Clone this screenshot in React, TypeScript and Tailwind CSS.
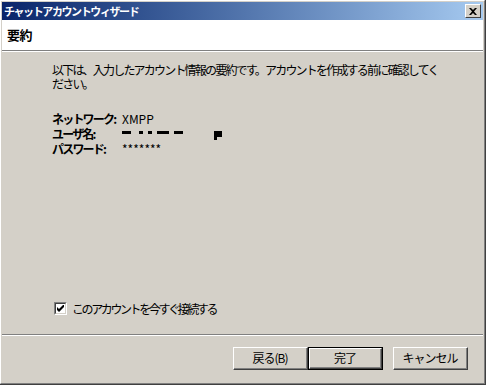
import React from 'react';

const font = { fontFamily: '"Noto Sans CJK JP", "Liberation Sans", sans-serif' };

const Btn = ({ label, isDefault = false }: { label: string; isDefault?: boolean }) => (
  <div
    className={`w-[75px] h-[23px] ${isDefault ? 'border border-black' : ''}`}
  >
    <div className="w-full h-full border-t border-l border-white border-r border-b border-r-[#404040] border-b-[#404040]">
      <div className="w-full h-full border-r border-b border-[#808080] flex items-center justify-center text-[12px] leading-none text-black tracking-[-1px]">
        {label}
      </div>
    </div>
  </div>
);

// redacted username drawn as black blocks
const Redacted = () => (
  <svg width="102" height="10" viewBox="0 0 102 10" className="block">
    <rect x="0" y="0" width="9" height="3" fill="#000" />
    <rect x="17" y="0" width="4" height="3" fill="#000" />
    <rect x="26" y="0" width="4" height="3" fill="#000" />
    <rect x="35" y="0" width="12" height="3" fill="#000" />
    <rect x="52" y="0" width="9" height="3" fill="#000" />
    <rect x="92" y="0" width="8" height="6" fill="#000" />
    <rect x="92" y="6" width="3" height="3" fill="#000" />
  </svg>
);

const App = () => {
  return (
    <div className="w-[486px] h-[385px] bg-[#d4d0c8] border-r border-b border-[#404040]" style={font}>
      <div className="w-full h-full flex flex-col border-t border-l border-white border-r border-b border-r-[#808080] border-b-[#808080] p-[1px]">
        {/* Title bar */}
        <div className="h-[18px] flex items-center justify-between pl-[2px] pr-[2px] bg-gradient-to-r from-[#0a246a] to-[#a6caf0]">
          <span className="text-white font-bold text-[11px] leading-none tracking-[-1.4px]">チャットアカウントウィザード</span>
          <div className="w-[16px] h-[14px] bg-[#d4d0c8] border-t border-l border-white border-r border-b border-r-[#404040] border-b-[#404040] flex items-center justify-center">
            <svg width="8" height="7" viewBox="0 0 8 7">
              <path d="M0 0h2l2 2 2-2h2L5 3.5 8 7H6L4 5 2 7H0l3-3.5z" fill="#000" />
            </svg>
          </div>
        </div>

        {/* Header */}
        <div className="h-[30px] bg-white flex items-center pl-[5px]">
          <span className="font-bold text-[13px] text-black tracking-[-0.5px]">要約</span>
        </div>
        <div className="h-px bg-[#808080]" />
        <div className="h-px bg-white" />

        {/* Body */}
        <div className="flex-1 flex flex-col pl-[50px] pt-[11px] text-[12px] tracking-[-1.8px] text-black">
          <div className="leading-[14px]">
            <div className="whitespace-nowrap">以下は、入力したアカウント情報の要約です。アカウントを作成する前に確認してく</div>
            <div className="whitespace-nowrap">ださい。</div>
          </div>

          <div className="mt-[20px] grid grid-cols-[70px_1fr] leading-[15px]">
            <span className="font-bold whitespace-nowrap">ネットワーク:</span>
            <span className="tracking-normal">XMPP</span>
            <span className="font-bold whitespace-nowrap">ユーザ名:</span>
            <span className="flex items-start pt-[5px]"><Redacted /></span>
            <span className="font-bold whitespace-nowrap">パスワード:</span>
            <span className="tracking-normal">*******</span>
          </div>

          <div className="flex-1" />

          <div className="flex items-center gap-[5px] pl-[2px] mb-[19px]">
            <div className="w-[13px] h-[13px] border-t border-l border-[#808080] border-r border-b border-r-white border-b-white">
              <div className="w-full h-full bg-white border-t border-l border-[#404040] border-r border-b border-r-[#d4d0c8] border-b-[#d4d0c8] flex items-center justify-center">
                <svg width="7" height="7" viewBox="0 0 7 7">
                  <path d="M0 2v3l2 2 5-5V-1L2 4z" fill="#000" />
                </svg>
              </div>
            </div>
            <span className="leading-none tracking-[-2.4px]">このアカウントを今すぐ接続する</span>
          </div>
        </div>

        {/* Separator */}
        <div className="h-px bg-[#808080]" />
        <div className="h-px bg-white" />

        {/* Buttons */}
        <div className="h-[46px] flex items-start justify-end pt-[11px] pr-[15px]">
          <Btn label="戻る(B)" />
          <Btn label="完了" isDefault />
          <div className="w-[10px]" />
          <Btn label="キャンセル" />
        </div>
      </div>
    </div>
  );
};

export default App;
